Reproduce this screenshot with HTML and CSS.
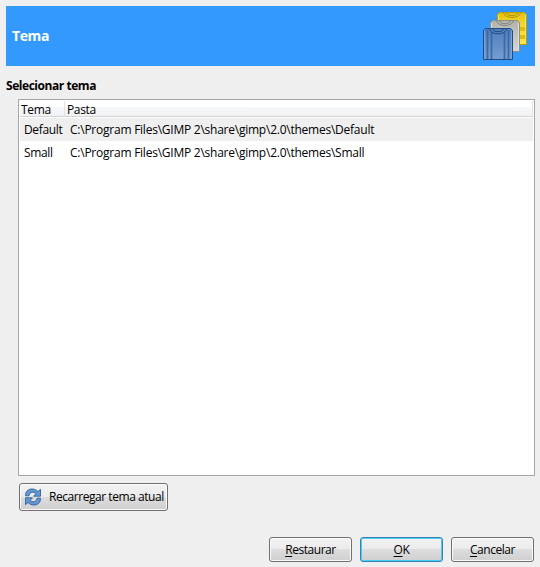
FILE: index.html
```html
<!DOCTYPE html>
<html lang="pt-BR">
<head>
<meta charset="utf-8">
<title>Tema</title>
<link rel="stylesheet" href="styles.css">
</head>
<body>
<header class="banner">
  <h1>Tema</h1>
  <svg class="shirts" width="46" height="50" viewBox="0 0 46 50">
    <defs>
      <linearGradient id="gold" x2="0" y2="1"><stop stop-color="#e0c010"/><stop offset=".3" stop-color="#f2d428"/><stop offset="1" stop-color="#ffe650"/></linearGradient>
      <linearGradient id="silver" x2="0" y2="1"><stop stop-color="#b4b4ae"/><stop offset="1" stop-color="#d6d6d1"/></linearGradient>
      <linearGradient id="blue" x2="0" y2="1"><stop stop-color="#4d7fbd"/><stop offset="1" stop-color="#769dcf"/></linearGradient>
    </defs>
    <g transform="translate(13 1)">
      <path d="M1.500 2.500L3.500 .5H28.500L30.500 2.500V32.500H1.500Z" fill="url(#gold)" stroke="#bd9c08"/>
      <path d="M2 15H30V19H2ZM2 23H30V27H2Z" fill="#dfbc10"/>
      <path d="M2.500 32V3M29.500 3V32" stroke="#f8e35a"/>
      <path d="M7.500 1C9 7 23 7 24.500 1M10.500 1C11 4.500 21 4.500 21.500 1" fill="none" stroke="#b39508"/>
    </g>
    <g transform="translate(6 9)">
      <path d="M1.500 2.500L3.500 .5H28.500L30.500 2.500V31.500H1.500Z" fill="url(#silver)" stroke="#8c8d86"/>
      <path d="M2.500 31V3M29.500 3V31" stroke="#dededa"/>
      <path d="M7.500 1C9 7 23 7 24.500 1M10.500 1C11 4.500 21 4.500 21.500 1" fill="none" stroke="#85867f"/>
    </g>
    <g transform="translate(0 17)">
      <path d="M.5 2.500L2.500 .5H27.500L29.500 2.500V31.500H.5Z" fill="url(#blue)" stroke="#204b84"/>
      <path d="M1.500 31V2.500M28.500 2.500V31" fill="none" stroke="#7da3d3"/>
      <path d="M4.500 2V31M8.500 4V31M21.500 4V31M25.500 2V31" stroke="#3a69a6" stroke-width="1.700"/>
      <path d="M6.500 1C8 7.500 22 7.500 23.500 1M9.500 1C10 4.500 20 4.500 20.500 1" fill="none" stroke="#204b84"/>
    </g>
  </svg>
</header>
<main>
  <h2>Selecionar tema</h2>
  <section class="list">
    <div class="columns"><span class="col-theme">Tema</span><span class="col-folder">Pasta</span></div>
    <div class="row selected"><span class="name">Default</span><span class="path">C:\Program Files\GIMP 2\share\gimp\2.0\themes\Default</span></div>
    <div class="row"><span class="name">Small</span><span class="path">C:\Program Files\GIMP 2\share\gimp\2.0\themes\Small</span></div>
  </section>
  <button class="reload">
    <svg width="18" height="18" viewBox="0 0 18 18">
      <path id="arrow" d="M1.500 7.800C1.500 3.500 4 1 8 1C10.500 1 12.500 2 14 3.600L16.500 1.300V8.200H9.500L12 5.700C9.500 3 5.500 4 5 7.800Z" fill="#6497cf" stroke="#2f609d" stroke-width=".9" stroke-linejoin="round"/>
      <use href="#arrow" transform="rotate(180 9 9)"/>
    </svg>
    <span>Recarregar tema atual</span>
  </button>
</main>
<footer>
  <button><u>R</u>estaurar</button>
  <button class="primary"><u>O</u>K</button>
  <button><u>C</u>ancelar</button>
</footer>
</body>
</html>
```
FILE: styles.css
```css
* { box-sizing: border-box; }
body {
  margin: 0;
  padding: 6px 5px 5px 6px;
  width: 540px;
  height: 567px;
  display: flex;
  flex-direction: column;
  background: #efefef;
  color: #000;
  font: 12px/16px "Open Sans", "Noto Sans", sans-serif;
  letter-spacing: -0.35px;
  white-space: nowrap;
  overflow: hidden;
}
h1, h2 { margin: 0; font-weight: 700; }
.banner {
  height: 60px;
  flex: none;
  display: flex;
  align-items: center;
  justify-content: space-between;
  padding: 0 6px;
  background: #3399ff;
  color: #fff;
}
h1 { font-size: 14px; line-height: 20px; letter-spacing: -0.4px; }
.shirts { display: block; }
h2 { font-size: 12px; line-height: 16px; margin-top: 12px; letter-spacing: -0.45px; }
.list {
  margin: 5px -1px 0 12px;
  width: 517px;
  height: 377px;
  border: 1px solid #a5a5aa;
  background: #fff;
  padding: 1px;
}
.columns {
  display: flex;
  height: 16px;
  border-bottom: 1px solid #d5d5d5;
  background: linear-gradient(#fff 0 40%, #f7f8fa 41%, #f1f2f4);
  line-height: 17px;
}
.col-theme { width: 45px; padding-left: 1px; border-right: 1px solid #e2e3e6; }
.col-folder { flex: 1; padding-left: 2px; border-right: 1px solid #e2e3e6; }
.row { height: 23px; display: flex; align-items: center; padding-left: 4px; }
.selected { background: #efefef; margin-top: 1px; }
.name { width: 46px; }
.path { letter-spacing: -0.24px; }
button {
  width: 83px;
  height: 25px;
  padding: 0;
  border: 1px solid #707070;
  border-radius: 3px;
  background: linear-gradient(#f2f2f2, #ebebeb 49%, #dddddd 50%, #cfcfcf);
  box-shadow: inset 0 0 0 1px #fafafa;
  color: #000;
  font: inherit;
  letter-spacing: -0.45px;
}
u { text-underline-offset: 2px; }
.reload {
  display: flex;
  align-items: center;
  gap: 7px;
  width: 149px;
  height: 28px;
  margin: 7px 0 0 13px;
  padding-left: 4px;
}
.primary { border-color: #3c7fb1; box-shadow: inset 0 0 0 1px #45d0f8; }
footer { display: flex; justify-content: flex-end; gap: 8px; margin: auto 1px 0 0; }
```
